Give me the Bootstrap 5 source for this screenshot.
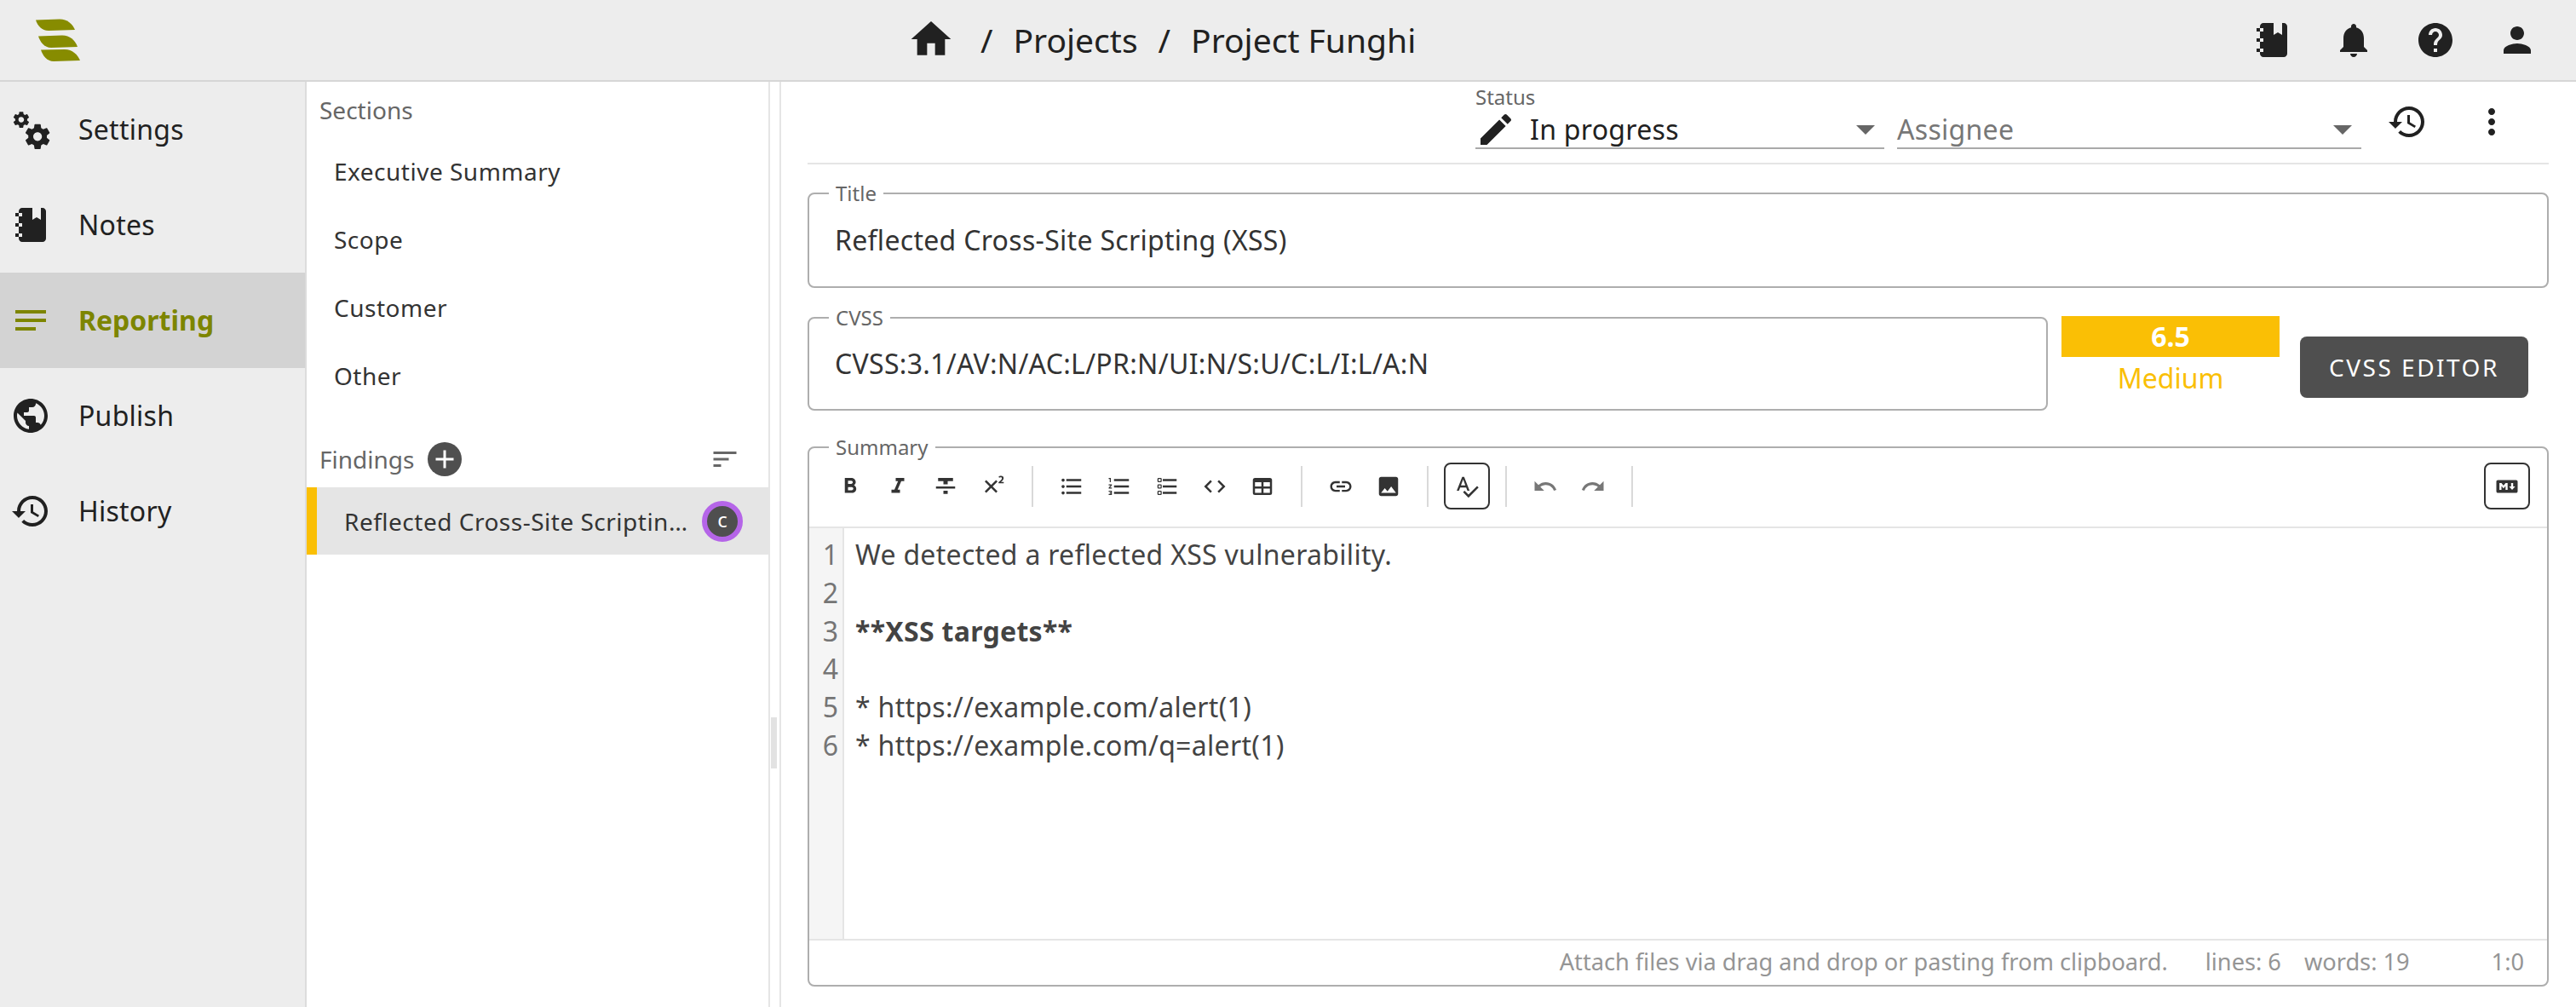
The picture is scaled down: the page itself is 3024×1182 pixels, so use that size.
<!DOCTYPE html>
<html lang="en">
<head>
  <meta charset="UTF-8">
  <title>Project Funghi</title>
  <link href="https://cdn.jsdelivr.net/npm/bootstrap@5.3.0/dist/css/bootstrap.min.css" rel="stylesheet">
  <style>
    html, body { height: 100%; overflow: hidden; }
    body { font-family: "Noto Sans", sans-serif; font-size: 32px; color: #212121; background: #fff; }
    svg { fill: currentColor; display: block; flex: none; }

    .top-bar { height: 96px; padding: 0 45px 0 42px; background: #ededed; border-bottom: 2px solid #d6d6d6; flex-wrap: nowrap; justify-content: flex-start; }
    .logo-mark { width: 52px; height: 50px; color: #878c00; }
    .crumbs { margin-left: 971px; font-size: 39px; line-height: 1; gap: 24px; padding-bottom: 2px; }
    .crumbs svg { margin-right: 6px; }
    .top-icons { gap: 48px; margin-left: auto; }

    .app-body { height: calc(100% - 96px); }
    .side-nav { width: 360px; flex: none; background: #ededed; border-right: 2px solid #dcdcdc; }
    .side-link { height: 112px; padding: 0 0 0 12px; gap: 32px; color: #212121; font-size: 32px; letter-spacing: .25px; }
    .side-link.on { background: #d3d3d3; color: #7d8500; font-weight: 700; letter-spacing: 0; }
    .cog-ic { margin: 0 -1px; }

    .mid-col { width: 544px; flex: none; border-right: 2px solid #e5e5e5; }
    .col-label { color: #666; font-size: 28px; padding-left: 15px; }
    .sect-head { height: 65px; }
    .sect-item { height: 80px; padding: 0 0 0 32px; border: 0; font-size: 28px; letter-spacing: .5px; color: #333; background: none; }
    .find-head { height: 91px; padding: 24px 33px 0 15px; }
    .add-round { width: 40px; height: 40px; border-radius: 50%; background: #4f4f4f; color: #fff; margin-left: 16px; }
    .sort-btn { color: #666; margin-left: auto; }
    .find-row { height: 79px; background: #e5e5e5; border-left: 12px solid #fabf05; padding-left: 32px; font-size: 28px; letter-spacing: .5px; color: #333; }
    .find-name { width: 403px; white-space: nowrap; }
    .who-ring { width: 48px; height: 48px; margin-left: 17px; border-radius: 50%; background: #4f4f4f; border: 6px solid #b565e8; color: #fff; font-size: 24px; line-height: 1; letter-spacing: 0; padding-bottom: 4px; }

    .split-grip { width: 11px; flex: none; padding-top: 746px; }
    .split-grip i { display: block; width: 7px; height: 60px; margin-left: 1px; background: #e2e2e2; }

    .main-col { flex: 1; min-width: 0; border-left: 2px solid #e5e5e5; padding: 0 32px 0 31px; }
    .status-bar { height: 97px; padding: 0 43px 16px 0; border-bottom: 2px solid #e5e5e5; }
    .status-label { font-size: 24px; color: #666; line-height: 24px; margin-bottom: -1px; }
    .pick { height: 50px; border-bottom: 2px solid #a9a9a9; padding-top: 6px; font-size: 32px; line-height: 42px; letter-spacing: .3px; }
    .pick-status { width: 480px; }
    .pick-who { width: 545px; margin-left: 15px; color: #777; }
    .pick-arrow { width: 0; height: 0; border-left: 11px solid transparent; border-right: 11px solid transparent; border-top: 11px solid #666; margin-left: auto; margin-right: 11px; }
    .tool-round { margin-bottom: 8px; }
    .gap-hist { margin-left: 30px; }
    .gap-more { margin-left: 51px; }

    .field-box { border: 2px solid #aeaeae; border-radius: 8px; padding: 0; margin: 0; min-width: 0; }
    .field-box legend { float: none; width: auto; font-size: 24px; line-height: 24px; color: #666; padding: 0 8px; margin: 0 0 0 23px; }
    .field-text { padding: 20px 0 0 30px; line-height: 44px; color: #333; font-size: 32px; letter-spacing: .3px; }
    .title-box { height: 123px; margin-top: 22px; }
    .title-box .field-text { padding-top: 21px; }
    .cvss-row { margin-top: 23px; }
    .cvss-box { width: 1456px; height: 121px; flex: none; }
    .score-col { width: 256px; margin: 10px 0 0 16px; flex: none; text-align: center; }
    .score-tile { height: 48px; line-height: 48px; background: #fabf05; color: #fff; font-weight: 700; font-size: 32px; }
    .score-word { color: #fabf05; font-size: 32px; line-height: 50px; }
    .cvss-btn { width: 268px; height: 72px; margin: 34px 0 0 24px; flex: none; background: #4f4f4f; color: #fff; border: 0; border-radius: 8px; font-size: 28px; letter-spacing: 2.5px; padding: 0; }
    .cvss-btn:hover { background: #4f4f4f; color: #fff; }

    .summary-box { height: 645px; margin-top: 31px; }
    .md-tools { height: 83px; padding: 6px 20px 0 21px; border-bottom: 2px solid #e5e5e5; align-items: flex-start; }
    .tool-btn { width: 54px; height: 55px; margin-right: 2px; border: 2px solid transparent; border-radius: 8px; color: #333; }
    .tool-btn.lit { border-color: #333; }
    .tool-btn.dim { color: #777; }
    .tool-sep { width: 2px; height: 48px; margin: 4px 18px 0 16px; background: #d9d9d9; flex: none; }
    .md-body { height: 482px; }
    .md-gutter { width: 41px; background: #f5f5f5; border-right: 2px solid #e5e5e5; color: #757575; text-align: right; padding: 9px 5px 0 0; flex: none; font-size: 32px; line-height: 44.8px; }
    .md-lines { padding: 9px 0 0 13px; color: #434343; font-size: 32px; line-height: 44.8px; letter-spacing: .3px; white-space: pre; }
    .md-foot { height: 54px; border-top: 2px solid #e5e5e5; color: #959595; font-size: 27.2px; padding: 0 27px 2px 0; }
    .md-foot span { white-space: nowrap; }
    .foot-lines { margin-left: 44px; }
    .foot-words { margin-left: 27px; }
    .foot-pos { margin-left: 96px; }
  </style>
</head>
<body>

  <!-- top bar -->
  <nav class="navbar top-bar">
    <svg class="logo-mark" viewBox="0 0 52 50">
      <path d="M0 1.5 28 .5C37 .5 43 6 46 13L15 14C7 14 2 8 0 1.5Z"/>
      <path d="M3 20.5 31 19.5C40 19.5 46 25 49 33L18 34C10 34 5 27 3 20.5Z"/>
      <path d="M6 36.5 34 36C43 36 49 42 52 49L21 50C13 50 8 43 6 36.5Z"/>
    </svg>
    <div class="crumbs d-flex align-items-center">
      <svg width="56" height="56" viewBox="0 0 24 24"><path d="M10 20v-6h4v6h5v-8h3L12 3 2 12h3v8z"/></svg>
      <span>/</span><span>Projects</span><span>/</span><span>Project Funghi</span>
    </div>
    <div class="top-icons d-flex align-items-center">
      <svg width="48" height="48" viewBox="0 0 24 24"><path d="M3,7V5H5V4C5,2.89 5.9,2 7,2H13V9L15.5,7.5L18,9V2H19C20.05,2 21,2.95 21,4V20C21,21.05 20.05,22 19,22H7C5.95,22 5,21.05 5,20V19H3V17H5V13H3V11H5V7H3M7,11H5V13H7V11M7,7V5H5V7H7M7,19V17H5V19H7Z"/></svg>
      <svg width="48" height="48" viewBox="0 0 24 24"><path d="M12 22c1.1 0 2-.9 2-2h-4c0 1.1.89 2 2 2zm6-6v-5c0-3.07-1.64-5.64-4.5-6.32V4c0-.83-.67-1.5-1.5-1.5s-1.5.67-1.5 1.5v.68C7.63 5.36 6 7.92 6 11v5l-2 2v1h16v-1l-2-2z"/></svg>
      <svg width="48" height="48" viewBox="0 0 24 24"><path d="M12 2C6.48 2 2 6.48 2 12s4.48 10 10 10 10-4.48 10-10S17.52 2 12 2zm1 17h-2v-2h2v2zm2.07-7.75l-.9.92C13.45 12.9 13 13.5 13 15h-2v-.5c0-1.1.45-2.1 1.17-2.83l1.24-1.26c.37-.36.59-.86.59-1.41 0-1.1-.9-2-2-2s-2 .9-2 2H8c0-2.21 1.79-4 4-4s4 1.79 4 4c0 .88-.36 1.68-.93 2.25z"/></svg>
      <svg width="48" height="48" viewBox="0 0 24 24"><path d="M12 12c2.21 0 4-1.79 4-4s-1.79-4-4-4-4 1.79-4 4 1.79 4 4 4zm0 2c-2.67 0-8 1.34-8 4v2h16v-2c0-2.66-5.33-4-8-4z"/></svg>
    </div>
  </nav>

  <div class="app-body d-flex">

    <!-- left nav -->
    <div class="side-nav nav flex-column flex-nowrap">
      <a class="side-link nav-link d-flex align-items-center">
        <svg class="cog-ic" width="50" height="50" viewBox="0 0 24 24"><path d="M15.9,18.45C17.25,18.45 18.35,17.35 18.35,16C18.35,14.65 17.25,13.55 15.9,13.55C14.54,13.55 13.45,14.65 13.45,16C13.45,17.35 14.54,18.45 15.9,18.45M21.1,16.68L22.58,17.84C22.71,17.95 22.75,18.13 22.66,18.29L21.26,20.71C21.17,20.86 21,20.92 20.83,20.86L19.09,20.16C18.73,20.44 18.33,20.67 17.91,20.85L17.64,22.7C17.62,22.87 17.47,23 17.3,23H14.5C14.32,23 14.18,22.87 14.15,22.7L13.89,20.85C13.46,20.67 13.07,20.44 12.71,20.16L10.96,20.86C10.81,20.92 10.62,20.86 10.54,20.71L9.14,18.29C9.05,18.13 9.09,17.95 9.22,17.84L10.7,16.68L10.65,16L10.7,15.31L9.22,14.16C9.09,14.05 9.05,13.86 9.14,13.71L10.54,11.29C10.62,11.13 10.81,11.07 10.96,11.13L12.71,11.84C13.07,11.56 13.46,11.32 13.89,11.15L14.15,9.29C14.18,9.13 14.32,9 14.5,9H17.3C17.47,9 17.62,9.13 17.64,9.29L17.91,11.15C18.33,11.32 18.73,11.56 19.09,11.84L20.83,11.13C21,11.07 21.17,11.13 21.26,11.29L22.66,13.71C22.75,13.86 22.71,14.05 22.58,14.16L21.1,15.31L21.15,16L21.1,16.68M6.69,8.07C7.56,8.07 8.26,7.37 8.26,6.5C8.26,5.63 7.56,4.92 6.69,4.92A1.58,1.58 0 0,0 5.11,6.5C5.11,7.37 5.82,8.07 6.69,8.07M10.03,6.94L11,7.68C11.07,7.75 11.09,7.87 11.03,7.97L10.13,9.53C10.08,9.63 9.96,9.67 9.86,9.63L8.74,9.18L8,9.62L7.81,10.81C7.79,10.92 7.7,11 7.59,11H5.79C5.67,11 5.58,10.92 5.56,10.81L5.4,9.62L4.64,9.18L3.5,9.63C3.41,9.67 3.3,9.63 3.24,9.53L2.34,7.97C2.28,7.87 2.31,7.75 2.39,7.68L3.34,6.94L3.31,6.5L3.34,6.06L2.39,5.32C2.31,5.25 2.28,5.13 2.34,5.03L3.24,3.47C3.3,3.37 3.41,3.33 3.5,3.37L4.63,3.82L5.4,3.38L5.56,2.19C5.58,2.08 5.67,2 5.79,2H7.59C7.7,2 7.79,2.08 7.81,2.19L8,3.38L8.74,3.82L9.86,3.37C9.96,3.33 10.08,3.37 10.13,3.47L11.03,5.03C11.09,5.13 11.07,5.25 11,5.32L10.03,6.06L10.06,6.5L10.03,6.94Z"/></svg>
        Settings
      </a>
      <a class="side-link nav-link d-flex align-items-center">
        <svg width="48" height="48" viewBox="0 0 24 24"><path d="M3,7V5H5V4C5,2.89 5.9,2 7,2H13V9L15.5,7.5L18,9V2H19C20.05,2 21,2.95 21,4V20C21,21.05 20.05,22 19,22H7C5.95,22 5,21.05 5,20V19H3V17H5V13H3V11H5V7H3M7,11H5V13H7V11M7,7V5H5V7H7M7,19V17H5V19H7Z"/></svg>
        Notes
      </a>
      <a class="side-link on nav-link d-flex align-items-center">
        <svg width="48" height="48" viewBox="0 0 24 24"><path d="M3 18h12v-2H3v2zM3 6v2h18V6H3zm0 7h18v-2H3v2z"/></svg>
        Reporting
      </a>
      <a class="side-link nav-link d-flex align-items-center">
        <svg width="48" height="48" viewBox="0 0 24 24"><path d="M12 2C6.48 2 2 6.48 2 12s4.48 10 10 10 10-4.48 10-10S17.52 2 12 2zm-1 17.93c-3.95-.49-7-3.85-7-7.93 0-.62.08-1.21.21-1.79L9 15v1c0 1.1.9 2 2 2v1.93zm6.9-2.54c-.26-.81-1-1.39-1.9-1.39h-1v-3c0-.55-.45-1-1-1H8v-2h2c.55 0 1-.45 1-1V7h2c1.1 0 2-.9 2-2v-.41c2.93 1.19 5 4.06 5 7.41 0 2.08-.8 3.97-2.1 5.39z"/></svg>
        Publish
      </a>
      <a class="side-link nav-link d-flex align-items-center">
        <svg width="48" height="48" viewBox="0 0 24 24"><path d="M13 3c-4.97 0-9 4.03-9 9H1l3.89 3.89.07.14L9 12H6c0-3.87 3.13-7 7-7s7 3.13 7 7-3.13 7-7 7c-1.93 0-3.68-.79-4.94-2.06l-1.42 1.42C8.27 19.99 10.51 21 13 21c4.97 0 9-4.03 9-9s-4.03-9-9-9zm-1 5v5l4.28 2.54.72-1.21-3.5-2.08V8H12z"/></svg>
        History
      </a>
    </div>

    <!-- sections and findings -->
    <div class="mid-col">
      <div class="sect-head col-label d-flex align-items-center">Sections</div>
      <div class="list-group list-group-flush">
        <div class="sect-item list-group-item d-flex align-items-center">Executive Summary</div>
        <div class="sect-item list-group-item d-flex align-items-center">Scope</div>
        <div class="sect-item list-group-item d-flex align-items-center">Customer</div>
        <div class="sect-item list-group-item d-flex align-items-center">Other</div>
      </div>
      <div class="find-head col-label d-flex align-items-center">
        <span>Findings</span>
        <div class="add-round d-flex align-items-center justify-content-center">
          <svg width="36" height="36" viewBox="0 0 24 24"><path d="M19 13h-6v6h-2v-6H5v-2h6V5h2v6h6v2z"/></svg>
        </div>
        <svg class="sort-btn" width="36" height="36" viewBox="0 0 24 24"><path d="M3 18h6v-2H3v2zM3 6v2h18V6H3zm0 7h12v-2H3v2z"/></svg>
      </div>
      <div class="find-row d-flex align-items-center">
        <div class="find-name">Reflected Cross-Site Scriptin…</div>
        <div class="who-ring d-flex align-items-center justify-content-center">c</div>
      </div>
    </div>

    <div class="split-grip"><i></i></div>

    <!-- finding editor -->
    <div class="main-col">
      <div class="status-bar d-flex justify-content-end align-items-end">
        <div>
          <div class="status-label">Status</div>
          <div class="pick pick-status d-flex align-items-center">
            <svg width="48" height="48" viewBox="0 0 24 24"><path d="M3 17.25V21h3.75L17.81 9.94l-3.75-3.75L3 17.25zM20.71 7.04c.39-.39.39-1.02 0-1.41l-2.34-2.34c-.39-.39-1.02-.39-1.41 0l-1.83 1.83 3.75 3.75 1.83-1.83z"/></svg>
            <span class="ms-3">In progress</span>
            <span class="pick-arrow"></span>
          </div>
        </div>
        <div class="pick pick-who d-flex align-items-center">
          <span>Assignee</span>
          <span class="pick-arrow"></span>
        </div>
        <svg class="tool-round gap-hist" width="48" height="48" viewBox="0 0 24 24"><path d="M13 3c-4.97 0-9 4.03-9 9H1l3.89 3.89.07.14L9 12H6c0-3.87 3.13-7 7-7s7 3.13 7 7-3.13 7-7 7c-1.93 0-3.68-.79-4.94-2.06l-1.42 1.42C8.27 19.99 10.51 21 13 21c4.97 0 9-4.03 9-9s-4.03-9-9-9zm-1 5v5l4.28 2.54.72-1.21-3.5-2.08V8H12z"/></svg>
        <svg class="tool-round gap-more" width="48" height="48" viewBox="0 0 24 24"><path d="M12 8c1.1 0 2-.9 2-2s-.9-2-2-2-2 .9-2 2 .9 2 2 2zm0 2c-1.1 0-2 .9-2 2s.9 2 2 2 2-.9 2-2-.9-2-2-2zm0 6c-1.1 0-2 .9-2 2s.9 2 2 2 2-.9 2-2-.9-2-2-2z"/></svg>
      </div>

      <fieldset class="field-box title-box">
        <legend>Title</legend>
        <div class="field-text">Reflected Cross-Site Scripting (XSS)</div>
      </fieldset>

      <div class="cvss-row d-flex align-items-start">
        <fieldset class="field-box cvss-box">
          <legend>CVSS</legend>
          <div class="field-text">CVSS:3.1/AV:N/AC:L/PR:N/UI:N/S:U/C:L/I:L/A:N</div>
        </fieldset>
        <div class="score-col">
          <div class="score-tile">6.5</div>
          <div class="score-word">Medium</div>
        </div>
        <button type="button" class="cvss-btn btn">CVSS EDITOR</button>
      </div>

      <fieldset class="field-box summary-box">
        <legend>Summary</legend>
        <div class="md-tools d-flex">
          <div class="tool-btn d-flex align-items-center justify-content-center"><svg width="30" height="30" viewBox="0 0 24 24"><path d="M15.6 10.79c.97-.67 1.65-1.77 1.65-2.79 0-2.26-1.75-4-4-4H7v14h7.04c2.09 0 3.71-1.7 3.71-3.79 0-1.52-.86-2.82-2.15-3.42zM10 6.5h3c.83 0 1.5.67 1.5 1.5s-.67 1.5-1.5 1.5h-3v-3zm3.5 9H10v-3h3.5c.83 0 1.5.67 1.5 1.5s-.67 1.5-1.5 1.5z"/></svg></div>
          <div class="tool-btn d-flex align-items-center justify-content-center"><svg width="30" height="30" viewBox="0 0 24 24"><path d="M10 4v3h2.21l-3.42 8H6v3h8v-3h-2.21l3.42-8H18V4z"/></svg></div>
          <div class="tool-btn d-flex align-items-center justify-content-center"><svg width="30" height="30" viewBox="0 0 24 24"><path d="M3,14H21V12H3M5,4V7H10V10H14V7H19V4M10,19H14V16H10V19Z"/></svg></div>
          <div class="tool-btn d-flex align-items-center justify-content-center"><svg width="30" height="30" viewBox="0 0 24 24"><path d="M16,7.41L11.41,12L16,16.59L14.59,18L10,13.41L5.41,18L4,16.59L8.59,12L4,7.41L5.41,6L10,10.59L14.59,6L16,7.41M21.85,9H16.97V8L17.86,7.18C18.62,6.54 19.18,6 19.56,5.55C19.93,5.11 20.12,4.7 20.13,4.32C20.14,4.04 20.05,3.8 19.86,3.62C19.68,3.43 19.39,3.34 19,3.33C18.69,3.34 18.42,3.4 18.16,3.5L17.5,3.89L17.05,2.72C17.32,2.5 17.64,2.33 18.03,2.19C18.42,2.05 18.85,2 19.32,2C20.1,2 20.7,2.2 21.1,2.61C21.5,3 21.72,3.54 21.72,4.2C21.71,4.77 21.53,5.3 21.18,5.79C20.84,6.28 20.42,6.74 19.91,7.17L19.27,7.72V7.74H21.85V9Z"/></svg></div>
          <div class="tool-sep"></div>
          <div class="tool-btn d-flex align-items-center justify-content-center"><svg width="30" height="30" viewBox="0 0 24 24"><path d="M4 10.5c-.83 0-1.5.67-1.5 1.5s.67 1.5 1.5 1.5 1.5-.67 1.5-1.5-.67-1.5-1.5-1.5zm0-6c-.83 0-1.5.67-1.5 1.5S3.17 7.5 4 7.5 5.5 6.83 5.5 6 4.83 4.5 4 4.5zm0 12c-.83 0-1.5.68-1.5 1.5s.68 1.5 1.5 1.5 1.5-.68 1.5-1.5-.67-1.5-1.5-1.5zM7 19h14v-2H7v2zm0-6h14v-2H7v2zm0-8v2h14V5H7z"/></svg></div>
          <div class="tool-btn d-flex align-items-center justify-content-center"><svg width="30" height="30" viewBox="0 0 24 24"><path d="M2 17h2v.5H3v1h1v.5H2v1h3v-4H2v1zm1-9h1V4H2v1h1v3zm-1 3h1.8L2 13.1v.9h3v-1H3.2L5 10.9V10H2v1zm5-6v2h14V5H7zm0 14h14v-2H7v2zm0-6h14v-2H7v2z"/></svg></div>
          <div class="tool-btn d-flex align-items-center justify-content-center"><svg width="30" height="30" viewBox="0 0 24 24"><path d="M21,19V17H8V19H21M21,13V11H8V13H21M8,7H21V5H8V7M4,5V7H6V5H4M3,5A1,1 0 0,1 4,4H6A1,1 0 0,1 7,5V7A1,1 0 0,1 6,8H4A1,1 0 0,1 3,7V5M4,11V13H6V11H4M3,11A1,1 0 0,1 4,10H6A1,1 0 0,1 7,11V13A1,1 0 0,1 6,14H4A1,1 0 0,1 3,13V11M4,17V19H6V17H4M3,17A1,1 0 0,1 4,16H6A1,1 0 0,1 7,17V19A1,1 0 0,1 6,20H4C3.45,20 3,19.55 3,19V17Z"/></svg></div>
          <div class="tool-btn d-flex align-items-center justify-content-center"><svg width="30" height="30" viewBox="0 0 24 24"><path d="M9.4 16.6L4.8 12l4.6-4.6L8 6l-6 6 6 6 1.4-1.4zm5.2 0l4.6-4.6-4.6-4.6L16 6l6 6-6 6-1.4-1.4z"/></svg></div>
          <div class="tool-btn d-flex align-items-center justify-content-center"><svg width="30" height="30" viewBox="0 0 24 24"><path d="M5,4H19A2,2 0 0,1 21,6V18A2,2 0 0,1 19,20H5A2,2 0 0,1 3,18V6A2,2 0 0,1 5,4M5,8V12H11V8H5M13,8V12H19V8H13M5,14V18H11V14H5M13,14V18H19V14H13Z"/></svg></div>
          <div class="tool-sep"></div>
          <div class="tool-btn d-flex align-items-center justify-content-center"><svg width="30" height="30" viewBox="0 0 24 24"><path d="M3.9 12c0-1.71 1.39-3.1 3.1-3.1h4V7H7c-2.76 0-5 2.24-5 5s2.24 5 5 5h4v-1.9H7c-1.71 0-3.1-1.39-3.1-3.1zM8 13h8v-2H8v2zm9-6h-4v1.9h4c1.71 0 3.1 1.39 3.1 3.1s-1.39 3.1-3.1 3.1h-4V17h4c2.76 0 5-2.24 5-5s-2.24-5-5-5z"/></svg></div>
          <div class="tool-btn d-flex align-items-center justify-content-center"><svg width="30" height="30" viewBox="0 0 24 24"><path d="M21 19V5c0-1.1-.9-2-2-2H5c-1.1 0-2 .9-2 2v14c0 1.1.9 2 2 2h14c1.1 0 2-.9 2-2zM8.5 13.5l2.5 3.01L14.5 12l4.5 6H5l3.5-4.5z"/></svg></div>
          <div class="tool-sep"></div>
          <div class="tool-btn lit d-flex align-items-center justify-content-center"><svg width="30" height="30" viewBox="0 0 24 24"><path d="M12.45 16h2.09L9.43 3H7.57L2.46 16h2.09l1.12-3h5.64l1.14 3zm-6.02-5L8.5 5.48 10.57 11H6.43zm15.16.59l-8.09 8.09L9.83 16l-1.41 1.41 5.09 5.09L23 13l-1.41-1.41z"/></svg></div>
          <div class="tool-sep"></div>
          <div class="tool-btn dim d-flex align-items-center justify-content-center"><svg width="30" height="30" viewBox="0 0 24 24"><path d="M12.5 8c-2.65 0-5.05.99-6.9 2.6L2 7v9h9l-3.62-3.62c1.39-1.16 3.16-1.88 5.12-1.88 3.54 0 6.55 2.31 7.6 5.5l2.37-.78C21.08 11.03 17.15 8 12.5 8z"/></svg></div>
          <div class="tool-btn dim d-flex align-items-center justify-content-center"><svg width="30" height="30" viewBox="0 0 24 24"><path d="M18.4 10.6C16.55 8.99 14.15 8 11.5 8c-4.65 0-8.58 3.03-9.96 7.22L3.9 16c1.05-3.19 4.05-5.5 7.6-5.5 1.95 0 3.73.72 5.12 1.88L13 16h9V7l-3.6 3.6z"/></svg></div>
          <div class="tool-sep"></div>
          <div class="tool-btn lit ms-auto me-0 d-flex align-items-center justify-content-center"><svg width="30" height="30" viewBox="0 0 24 24"><path d="M20.56 18H3.44C2.65 18 2 17.37 2 16.59V7.41C2 6.63 2.65 6 3.44 6H20.56C21.35 6 22 6.63 22 7.41V16.59C22 17.37 21.35 18 20.56 18M6.81 15.19V11.53L8.73 13.88L10.65 11.53V15.19H12.58V8.81H10.65L8.73 11.16L6.81 8.81H4.89V15.19H6.81M19.69 12H17.77V8.81H15.85V12H13.92L16.81 15.28L19.69 12Z"/></svg></div>
        </div>
        <div class="md-body d-flex">
          <div class="md-gutter">1<br>2<br>3<br>4<br>5<br>6</div>
          <div class="md-lines">We detected a reflected XSS vulnerability.

<b>**XSS targets**</b>

* https://example.com/alert(1)
* https://example.com/q=alert(1)</div>
        </div>
        <div class="md-foot d-flex align-items-center justify-content-end">
          <span>Attach files via drag and drop or pasting from clipboard.</span>
          <span class="foot-lines">lines: 6</span>
          <span class="foot-words">words: 19</span>
          <span class="foot-pos">1:0</span>
        </div>
      </fieldset>
    </div>
  </div>

  <script src="https://cdn.jsdelivr.net/npm/bootstrap@5.3.0/dist/js/bootstrap.bundle.min.js"></script>
</body>
</html>
